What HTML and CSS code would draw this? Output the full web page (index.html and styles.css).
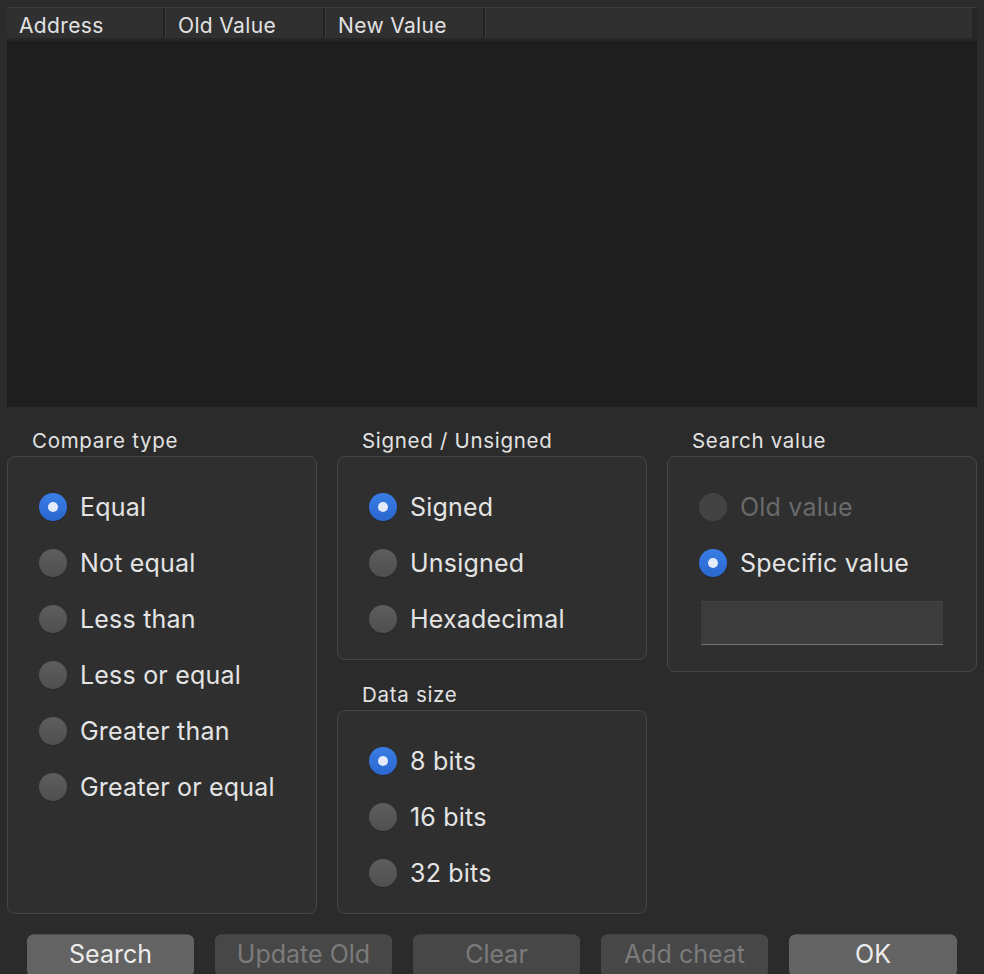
FILE: index.html
```html
<!DOCTYPE html>
<html>
<head>
<meta charset="utf-8">
<link rel="stylesheet" href="styles.css">
</head>
<body>
<div class="window">
  <div class="table">
    <div class="thead">
      <div class="th">Address</div>
      <div class="th">Old Value</div>
      <div class="th">New Value</div>
      <div class="th th-fill"></div>
      <div class="th-gutter"></div>
    </div>
    <div class="tbody"></div>
  </div>

  <div class="controls">
    <div class="col">
      <div class="title">Compare type</div>
      <div class="box box-compare">
        <div class="radio-row"><span class="radio on"></span><span class="label">Equal</span></div>
        <div class="radio-row"><span class="radio"></span><span class="label">Not equal</span></div>
        <div class="radio-row"><span class="radio"></span><span class="label">Less than</span></div>
        <div class="radio-row"><span class="radio"></span><span class="label">Less or equal</span></div>
        <div class="radio-row"><span class="radio"></span><span class="label">Greater than</span></div>
        <div class="radio-row"><span class="radio"></span><span class="label">Greater or equal</span></div>
      </div>
    </div>
    <div class="col">
      <div class="title">Signed / Unsigned</div>
      <div class="box box-small">
        <div class="radio-row"><span class="radio on"></span><span class="label">Signed</span></div>
        <div class="radio-row"><span class="radio"></span><span class="label">Unsigned</span></div>
        <div class="radio-row"><span class="radio"></span><span class="label">Hexadecimal</span></div>
      </div>
      <div class="title title-second">Data size</div>
      <div class="box box-small">
        <div class="radio-row"><span class="radio on"></span><span class="label">8 bits</span></div>
        <div class="radio-row"><span class="radio"></span><span class="label">16 bits</span></div>
        <div class="radio-row"><span class="radio"></span><span class="label">32 bits</span></div>
      </div>
    </div>
    <div class="col">
      <div class="title">Search value</div>
      <div class="box box-search">
        <div class="radio-row"><span class="radio disabled"></span><span class="label label-disabled">Old value</span></div>
        <div class="radio-row"><span class="radio on"></span><span class="label">Specific value</span></div>
        <div class="input"></div>
      </div>
    </div>
  </div>

  <div class="buttons">
    <div class="btn btn-search">Search</div>
    <div class="btn btn-off btn-update">Update Old</div>
    <div class="btn btn-off">Clear</div>
    <div class="btn btn-off">Add cheat</div>
    <div class="btn btn-ok">OK</div>
  </div>
</div>
</body>
</html>
```

FILE: styles.css
```css
html, body {
  margin: 0;
  padding: 0;
}
body {
  background: #2b2b2b;
  width: 984px;
  height: 974px;
  overflow: hidden;
  font-family: "Inter", "Liberation Sans", sans-serif;
  color: #e2e2e2;
}
.window {
  padding: 7px 7px 0 7px;
}
.table {
  width: 970px;
  height: 400px;
  background: #1e1e1e;
  display: flex;
  flex-direction: column;
}
.thead {
  display: flex;
  height: 30px;
  border-top: 1px solid #3b3b3b;
  border-bottom: 3px solid #262626;
  background: #303030;
}
.th {
  width: 145px;
  padding-left: 12px;
  font-size: 21px;
  letter-spacing: 0.35px;
  line-height: 30px;
  padding-top: 3px;
  height: 27px;
  overflow: hidden;
  color: #e2e2e2;
  border-right: 2px solid #222222;
  border-left: 1px solid #3e3e3e;
  box-sizing: content-box;
}
.th:first-child {
  border-left: none;
  width: 144px;
}
.th-fill {
  flex: 1;
  border-right: 1px solid #262626;
}
.th-gutter {
  width: 4px;
  background: #262626;
}
.tbody {
  flex: 1;
}
.controls {
  display: grid;
  grid-template-columns: 310px 310px 310px;
  column-gap: 20px;
  height: 507px;
}
.col {
  display: flex;
  flex-direction: column;
}
.title {
  font-size: 20.5px;
  letter-spacing: 0.7px;
  line-height: 24px;
  height: 24px;
  margin-top: 22px;
  margin-bottom: 3px;
  padding-left: 25px;
  color: #e2e2e2;
}
.title-second {
  margin-top: 23px;
}
.box {
  box-sizing: border-box;
  border: 1px solid #464646;
  border-radius: 8px;
  background: #2f2f2f;
  padding: 22px 0 0 31px;
}
.box-compare {
  height: 458px;
}
.box-small {
  height: 204px;
}
.box-search {
  height: 216px;
}
.radio-row {
  display: flex;
  align-items: center;
  height: 56px;
}
.radio {
  width: 28px;
  height: 28px;
  border-radius: 50%;
  box-sizing: border-box;
  background: linear-gradient(#5d5d5d, #4f4f4f);
  box-shadow: 0 0.5px 1px rgba(0,0,0,0.35);
  margin-right: 13px;
  position: relative;
  flex: none;
}
.radio.on {
  background: linear-gradient(#3a7ee6, #2a67cf);
}
.radio.on::after {
  content: "";
  position: absolute;
  left: 9px;
  top: 9px;
  width: 10px;
  height: 10px;
  border-radius: 50%;
  background: #e4ecfb;
}
.radio.disabled {
  background: #434343;
  box-shadow: none;
}
.label {
  font-size: 25px;
  letter-spacing: 0.2px;
  color: #e4e4e4;
  line-height: 30px;
}
.label-disabled {
  color: #6a6a6a;
}
.input {
  margin-top: 10px;
  margin-left: 2px;
  width: 242px;
  height: 44px;
  box-sizing: border-box;
  background: #3c3c3c;
  border-top: 1px solid #454545;
  border-bottom: 1px solid #717171;
}
.buttons {
  display: flex;
  gap: 21px;
  padding-left: 20px;
  margin-top: 21px;
}
.btn {
  width: 167px;
  height: 42px;
  border-radius: 7px;
  background: #636363;
  color: #ececec;
  font-size: 25px;
  line-height: 38px;
  text-align: center;
  box-shadow: 0 -0.5px 0 #777;
}
.btn-off {
  background: #474747;
  color: #7b7b7b;
  box-shadow: 0 -0.5px 0 #555;
}
.btn-update {
  width: 177px;
}
.btn-ok {
  width: 168px;
}
```
